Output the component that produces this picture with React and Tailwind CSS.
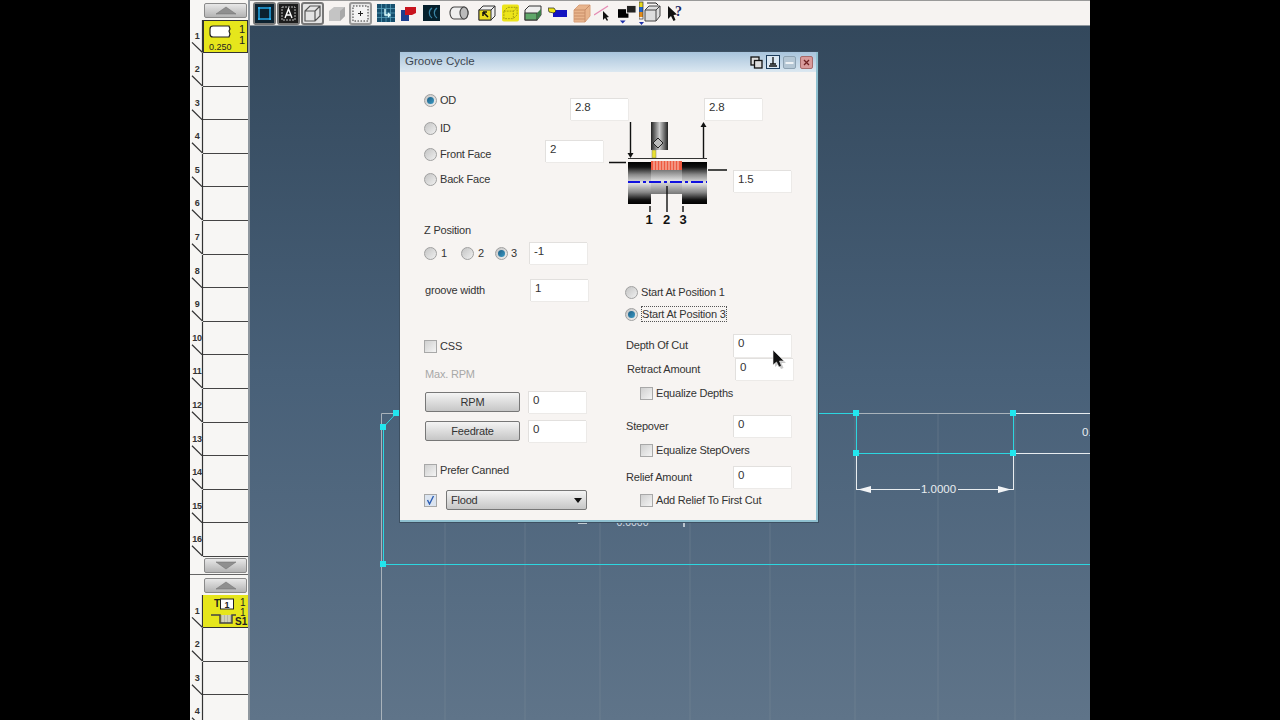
const rowsTop = [2, 3, 4, 5, 6, 7, 8, 9, 10, 11, 12, 13, 14, 15, 16];
const rowsBottom = [2, 3, 4];

function Notch() {
  return (
    <svg className="absolute left-0 top-0 w-[14px] h-full" viewBox="0 0 14 34" preserveAspectRatio="none">
      <path d="M2 23 L12.5 33.5 M12.5 0 V33.5" stroke="#333" strokeWidth="1.2" fill="none" />
    </svg>
  );
}

function RowNum({ n }) {
  return <div className="w-[13px] pl-[1px] flex items-center justify-center text-[9px] font-bold text-[#333] tracking-[-0.3px]">{n}</div>;
}

function ToolRow({ n }) {
  return (
    <div className="relative flex h-[33.6px]">
      <Notch />
      <RowNum n={n} />
      <div className="flex-1 border-b border-[#444] bg-[#f7f6f4]" />
    </div>
  );
}

function ScrollBtn({ down }) {
  return (
    <div className="ml-[14px] mr-[1px] h-[15px] rounded-[2px] border border-[#8a8a8a] bg-gradient-to-b from-[#e8e8e8] to-[#b4b4b4] flex items-center justify-center">
      <svg width="24" height="9" viewBox="0 0 24 9">
        <path d={down ? "M2 1 H22 L12 8 Z" : "M12 1 L22 8 H2 Z"} fill="#8f8f8f" stroke="#6f6f6f" strokeWidth="0.5" />
      </svg>
    </div>
  );
}

function LeftStrip() {
  return (
    <div className="w-[60px] shrink-0 h-full bg-[#f7f6f4] border-r-2 border-[#8f979e] pt-[3px] overflow-hidden">
      <ScrollBtn />
      <div className="relative flex h-[33px] mt-[2px]">
        <Notch />
        <RowNum n={1} />
        <div className="flex-1 bg-[#e6e61c] border border-[#333] relative">
          <svg className="absolute inset-0" width="44" height="31" viewBox="0 0 44 31">
            <path d="M9 5 H25 L26 8 L25 10 L26 13 L25 16 H9 Q6 16 6 13 V8 Q6 5 9 5 Z" fill="#fff" stroke="#222" strokeWidth="1.2" />
            <text x="35" y="12" fontSize="11" fontFamily="Liberation Sans, sans-serif" fill="#222">1</text>
            <text x="35" y="23" fontSize="11" fontFamily="Liberation Sans, sans-serif" fill="#222">1</text>
            <text x="5" y="29" fontSize="9" fontFamily="Liberation Sans, sans-serif" fill="#222">0.250</text>
          </svg>
        </div>
      </div>
      {rowsTop.map((n) => (
        <ToolRow key={n} n={n} />
      ))}
      <div className="mt-[1px]">
        <ScrollBtn down />
      </div>
      <div className="mt-[1px] h-[1px] border-t border-[#666]" />
      <div className="mt-[3px]">
        <ScrollBtn />
      </div>
      <div className="relative flex h-[33px] mt-[2px]">
        <Notch />
        <RowNum n={1} />
        <div className="flex-1 bg-[#e6e61c] border-b border-[#333] relative">
          <svg className="absolute inset-0" width="45" height="32" viewBox="0 0 45 32">
            <text x="11" y="12" fontSize="10" fontWeight="bold" fontFamily="Liberation Sans, sans-serif" fill="#222">T</text>
            <rect x="17.5" y="4" width="13" height="10" fill="#fff" stroke="#222" />
            <text x="21.5" y="12.5" fontSize="9" fontWeight="bold" fontFamily="Liberation Sans, sans-serif" fill="#222">1</text>
            <text x="37" y="11" fontSize="10" fontFamily="Liberation Sans, sans-serif" fill="#222">1</text>
            <text x="37" y="21" fontSize="10" fontFamily="Liberation Sans, sans-serif" fill="#222">1</text>
            <rect x="18" y="20" width="11" height="8" fill="#b8b8a8" />
            <path d="M20 20V28M23 20V28M26 20V28" stroke="#eeeecc" />
            <path d="M8 20 H17 V28 H29 V20 H33" fill="none" stroke="#444" strokeWidth="1.5" />
            <text x="32" y="30" fontSize="10" fontWeight="bold" fontFamily="Liberation Sans, sans-serif" fill="#222">S1</text>
          </svg>
        </div>
      </div>
      {rowsBottom.map((n) => (
        <ToolRow key={n} n={n} />
      ))}
    </div>
  );
}

function Framed({ children, dark }) {
  return (
    <div className={`w-[23px] h-[23px] rounded-[3px] border-2 border-[#777] flex items-center justify-center ${dark ? "bg-[#c9cdd1]" : "bg-[#e4e4e4]"}`}>
      {children}
    </div>
  );
}

function Toolbar() {
  return (
    <div className="h-[26px] shrink-0 bg-[#f6f3f1] border-t border-t-[#999] border-b border-b-[#8f979e] flex items-center pl-[3px]">
      <Framed dark>
        <svg width="19" height="19" viewBox="0 0 19 19">
          <rect width="19" height="19" fill="#0c2230" />
          <rect x="4" y="4" width="11" height="11" fill="none" stroke="#25a7e6" strokeWidth="1.5" />
          <path d="M3 3h2v2H3zM14 3h2v2h-2zM3 14h2v2H3zM14 14h2v2h-2z" fill="#25a7e6" />
        </svg>
      </Framed>
      <div className="ml-[1px]">
        <Framed dark>
          <svg width="19" height="19" viewBox="0 0 19 19">
            <rect width="19" height="19" fill="#1c1c1c" />
            <rect x="3" y="3" width="13" height="13" fill="none" stroke="#bbb" strokeDasharray="2 1" />
            <path d="M6 14 L9.5 5 L13 14 M7.5 11 H11.5" fill="none" stroke="#fff" strokeWidth="1.4" />
          </svg>
        </Framed>
      </div>
      <div className="ml-[1px]">
        <Framed>
          <svg width="19" height="19" viewBox="0 0 19 19">
            <path d="M2 7 L7 2 H17 V12 L12 17 H2 Z M2 7 H12 V17 M12 7 L17 2" fill="none" stroke="#555" strokeWidth="1.2" />
          </svg>
        </Framed>
      </div>
      <svg className="ml-[4px]" width="18" height="18" viewBox="0 0 18 18">
        <path d="M1 7 L6 3 H17 V12 L12 17 H1 Z" fill="#c4c4c4" />
        <path d="M12 7 L17 3 V12 L12 17 Z" fill="#a9a9a9" />
      </svg>
      <div className="ml-[3px] w-[23px] h-[23px] rounded-[3px] border-2 border-[#999] bg-[#e8e8e8] flex items-center justify-center">
        <svg width="17" height="17" viewBox="0 0 17 17">
          <rect x="1" y="1" width="15" height="15" fill="#f4f4f4" stroke="#333" strokeDasharray="1.5 1.5" />
          <path d="M8.5 6 V11 M6 8.5 H11" stroke="#222" />
        </svg>
      </div>
      <svg className="ml-[5px]" width="18" height="18" viewBox="0 0 18 18">
        <rect width="18" height="18" fill="#17506e" />
        <path d="M0 4.5H18M0 9H18M0 13.5H18M4.5 0V18M9 0V18M13.5 0V18" stroke="#5fa7c2" strokeWidth="0.7" />
        <path d="M8 5 V11 H13 M11 9 L13 11 L11 13" stroke="#dff" strokeWidth="1.4" fill="none" />
      </svg>
      <svg className="ml-[6px]" width="15" height="16" viewBox="0 0 15 16">
        <rect x="0" y="5" width="8" height="11" fill="#1c3f8f" />
        <path d="M4 2 H15 V8 L11 10 H4 Z" fill="#c8141e" />
      </svg>
      <svg className="ml-[7px]" width="17" height="16" viewBox="0 0 17 16">
        <rect width="17" height="16" fill="#06202c" />
        <path d="M9 3 A6 6 0 0 0 9 13 M14 3 A6 6 0 0 0 14 13" fill="none" stroke="#3b87a8" strokeWidth="1.2" />
      </svg>
      <svg className="ml-[9px]" width="20" height="16" viewBox="0 0 20 16">
        <path d="M5 2 A4 6 0 0 0 5 14 H15 A4 6 0 0 0 15 2 Z" fill="#eee" stroke="#444" strokeWidth="1.1" />
        <ellipse cx="15" cy="8" rx="4" ry="6" fill="#bbb" stroke="#444" strokeWidth="1.1" />
      </svg>
      <svg className="ml-[9px]" width="18" height="18" viewBox="0 0 18 18">
        <path d="M1 6 L5 2 H17 V12 L13 16 H1 Z" fill="#eee" stroke="#333" />
        <rect x="1" y="6" width="12" height="10" fill="#e8dc1c" stroke="#333" />
        <path d="M5 8 L10 13 M5 8 V12 M5 8 H9" stroke="#111" strokeWidth="1.5" />
        <path d="M13 6 L17 2" stroke="#333" />
      </svg>
      <svg className="ml-[6px]" width="17" height="18" viewBox="0 0 18 18">
        <rect width="18" height="18" rx="2" fill="#ece41a" />
        <path d="M2 7 L6 3 H16 V11 L12 15 H2 Z M2 7 H12 V15 M12 7 L16 3" fill="none" stroke="#a09a10" strokeDasharray="2 1" />
      </svg>
      <svg className="ml-[5px]" width="18" height="16" viewBox="0 0 18 16">
        <path d="M1 5 L5 1 H17 V10 L13 15 H1 Z" fill="#eee" stroke="#333" />
        <rect x="1" y="8" width="12" height="7" fill="#5fa86a" stroke="#333" />
        <path d="M13 8 L17 4 V10 L13 15 Z" fill="#3d7d4a" />
      </svg>
      <svg className="ml-[6px]" width="19" height="12" viewBox="0 0 19 12">
        <rect x="5" y="3" width="14" height="7" fill="#1414c0" />
        <path d="M0 1 L6 1 L8 4 L6 6 L1 5 Z" fill="#ece41a" stroke="#222" strokeWidth="0.7" />
      </svg>
      <svg className="ml-[6px]" width="18" height="20" viewBox="0 0 18 20">
        <path d="M1 7 L6 2 H17 V13 L12 19 H1 Z" fill="#e8b48c" stroke="#d9a27c" />
        <path d="M1 10 H12 M1 13 H12 M1 16 H12 M12 7 V19 M1 7 H12 L17 2" stroke="#c98e68" fill="none" />
      </svg>
      <svg className="ml-[3px]" width="18" height="18" viewBox="0 0 18 18">
        <path d="M0 11 L14 2" stroke="#e58bb4" strokeWidth="1.4" />
        <path d="M9 7 V16 L11 14 L13 17 L14 16 L12.5 13.5 L15 13 Z" fill="#111" />
      </svg>
      <svg className="ml-[6px]" width="19" height="22" viewBox="0 0 20 22">
        <rect x="0" y="7" width="11" height="9" fill="#000" />
        <rect x="9" y="3" width="10" height="8" fill="#222" stroke="#f6f3f1" />
        <path d="M2 19 H8 L5 22 Z" fill="#1c2fa8" />
      </svg>
      <svg className="ml-[2px]" width="23" height="24" viewBox="0 0 23 24">
        <rect x="0" y="1" width="4" height="5" fill="#e8d81c" />
        <rect x="0" y="6" width="4" height="5" fill="#2266cc" />
        <rect x="0" y="11" width="4" height="5" fill="#e08c1c" />
        <rect x="0" y="1" width="4" height="17" fill="none" stroke="#333" strokeWidth="0.7" />
        <path d="M6 9 L10 5 H21 V15 L17 20 H6 Z M6 9 H17 V20 M17 9 L21 5" fill="#ddd" stroke="#444" />
        <path d="M8 2 H17 L19 4" fill="none" stroke="#222" />
        <path d="M0 21 H5 L2.5 24 Z" fill="#1c2fa8" />
      </svg>
      <svg className="ml-[5px]" width="18" height="18" viewBox="0 0 18 18">
        <path d="M1 2 V15 L4 12 L6.5 17 L8.5 16 L6.5 11 L10 10.5 Z" fill="#111" />
        <text x="8" y="12" fontSize="14" fontWeight="bold" fontFamily="Liberation Serif, serif" fill="#1c2a66">?</text>
      </svg>
    </div>
  );
}

function CanvasDrawing() {
  const handles = [[396, 413], [383, 427], [856, 413], [1013, 413], [856, 453], [1013, 453], [383, 564]];
  const gridX = [445, 525, 600, 690, 770, 855, 938, 1015];
  return (
    <svg className="absolute inset-0" width="840" height="694" viewBox="250 26 840 694">
      {gridX.map((x) => (
        <line key={x} x1={x} y1="413" x2={x} y2="720" stroke="#8a97a2" strokeWidth="1" opacity="0.3" />
      ))}
      <path d="M381.5 720 V413.5 H1090" fill="none" stroke="#a9b3bb" strokeWidth="1" />
      <path d="M1013 413.5 H1090 M1013 453.5 H1090" stroke="#e8edf0" strokeWidth="1" fill="none" />
      <path d="M396 413.5 L383.5 427 V564.5 H1090 M818 413.5 H856.5 V453.5 H1013.5 V413.5" fill="none" stroke="#2cd6e0" strokeWidth="1" />
      {handles.map(([x, y]) => (
        <rect key={`${x}-${y}`} x={x - 3} y={y - 3} width="6" height="6" fill="#22e6ee" />
      ))}
      <path d="M856.5 456 V490 M1013.5 456 V490 M856 489.5 H920 M958 489.5 H1013" stroke="#e8edf0" fill="none" />
      <path d="M858 489.5 L871 486 V493 Z M1011 489.5 L998 486 V493 Z" fill="#f2f4f6" />
      <text x="938.5" y="493" textAnchor="middle" fontSize="11.5" fontFamily="Liberation Sans, sans-serif" fill="#e8edf0">1.0000</text>
      <text x="1082" y="436" fontSize="11.5" fontFamily="Liberation Sans, sans-serif" fill="#e8edf0">0.</text>
      <text x="632.5" y="526" textAnchor="middle" fontSize="10.5" fontFamily="Liberation Sans, sans-serif" fill="#d5dce2">0.0000</text>
      <path d="M578 523 H587 M684 523 V527" stroke="#e8edf0" strokeWidth="1.4" />
    </svg>
  );
}

function Radio({ checked }) {
  return (
    <span className="relative w-[13px] h-[13px] shrink-0 rounded-full border border-[#a0a0a0] bg-gradient-to-br from-[#c4c4c4] to-[#f0f0f0] flex items-center justify-center">
      {checked && <span className="w-[7px] h-[7px] rounded-full bg-gradient-to-br from-[#1d5f86] to-[#3d9ac4]" />}
    </span>
  );
}

function Check({ checked }) {
  return (
    <span className={`w-[13px] h-[13px] shrink-0 border border-[#a8a8a8] flex items-center justify-center ${checked ? "bg-[#dbe4f0]" : "bg-gradient-to-br from-[#d0d0d0] to-[#f4f4f4]"}`}>
      {checked && (
        <svg width="9" height="10" viewBox="0 0 9 10">
          <path d="M1.5 5 L3.5 9 L7.5 1" fill="none" stroke="#2f5fb4" strokeWidth="1.4" />
        </svg>
      )}
    </span>
  );
}

function Field({ value, className = "" }) {
  return (
    <div className={`w-[58px] h-[22px] shrink-0 bg-white border-t border-l border-[#e2e0de] shadow-[1px_1px_0_#eceae8] pl-[4px] text-[11.5px] leading-[17px] text-[#333] ${className}`}>
      {value}
    </div>
  );
}

function PushBtn({ children }) {
  return (
    <button className="w-[95px] h-[20px] rounded-[2px] border border-[#777] bg-gradient-to-b from-[#f4f4f4] to-[#c6c6c6] text-[11px] leading-[18px] text-[#333]">
      {children}
    </button>
  );
}

function GrooveDrawing() {
  return (
    <svg className="absolute left-[200px] top-[43px]" width="135" height="115" viewBox="600 115 135 115">
      <defs>
        <linearGradient id="body" x1="0" y1="0" x2="0" y2="1">
          <stop offset="0" stopColor="#000" />
          <stop offset="0.12" stopColor="#111" />
          <stop offset="0.3" stopColor="#888" />
          <stop offset="0.5" stopColor="#e4e4e4" />
          <stop offset="0.72" stopColor="#888" />
          <stop offset="0.9" stopColor="#111" />
          <stop offset="1" stopColor="#000" />
        </linearGradient>
        <linearGradient id="mid" x1="0" y1="0" x2="0" y2="1">
          <stop offset="0" stopColor="#777" />
          <stop offset="0.45" stopColor="#e4e4e4" />
          <stop offset="1" stopColor="#777" />
        </linearGradient>
        <linearGradient id="holder" x1="0" y1="0" x2="1" y2="0">
          <stop offset="0" stopColor="#222" />
          <stop offset="0.5" stopColor="#ccc" />
          <stop offset="1" stopColor="#222" />
        </linearGradient>
      </defs>
      <path d="M630.5 122 V154" stroke="#111" strokeWidth="1.4" />
      <path d="M627.5 153 H633.5 L630.5 158 Z" fill="#111" />
      <path d="M703.5 158 V126" stroke="#111" strokeWidth="1.4" />
      <path d="M700.5 127 H706.5 L703.5 122 Z" fill="#111" />
      <rect x="651" y="122" width="17" height="28" fill="url(#holder)" />
      <path d="M658 138 L663 143 L658 148 L653 143 Z" fill="#bbb" stroke="#222" />
      <rect x="652" y="150" width="4" height="8" fill="#e8e030" stroke="#777" strokeWidth="0.5" />
      <path d="M628 158.5 H707" stroke="#333" strokeWidth="1.2" />
      <path d="M609 162.5 H626 M708 170 H727" stroke="#111" strokeWidth="1.4" />
      <rect x="628" y="162" width="23" height="42" fill="url(#body)" />
      <rect x="651" y="170" width="32" height="24" fill="url(#mid)" />
      <rect x="682" y="162" width="25" height="42" fill="url(#body)" />
      <rect x="651" y="161" width="31" height="9" fill="#ee5a40" />
      <path d="M654 161V170M657 161V170M660 161V170M663 161V170M666 161V170M669 161V170M672 161V170M675 161V170M678 161V170" stroke="#f8e8e0" strokeWidth="0.8" />
      <path d="M628 182 H707" stroke="#1010e0" strokeWidth="2" strokeDasharray="12 3 3 3" />
      <path d="M650 206 V212 M683 206 V212" stroke="#111" strokeWidth="1.4" />
      <path d="M667 186 V212" stroke="#111" strokeWidth="1.4" />
      <text x="649" y="224" textAnchor="middle" fontSize="13" fontWeight="bold" fontFamily="Liberation Sans, sans-serif" fill="#111">1</text>
      <text x="666.5" y="224" textAnchor="middle" fontSize="13" fontWeight="bold" fontFamily="Liberation Sans, sans-serif" fill="#111">2</text>
      <text x="683" y="224" textAnchor="middle" fontSize="13" fontWeight="bold" fontFamily="Liberation Sans, sans-serif" fill="#111">3</text>
    </svg>
  );
}

function Dialog() {
  return (
    <div className="absolute left-[150px] top-[26px] w-[418px] h-[470px] bg-[#f7f4f2] border-b-2 border-r-2 border-[#8fc0d0] shadow-[0_0_0_1px_#3d5062] text-[11px] tracking-[-0.2px] text-[#333] flex flex-col">
      {/* barra de titulo */}
      <div className="h-[20px] shrink-0 bg-gradient-to-b from-[#a8c4dc] to-[#dce8f1] flex items-center pl-[5px] pr-[3px]">
        <span className="text-[11.5px] tracking-normal text-[#3c4650]">Groove Cycle</span>
        <div className="ml-auto flex items-center gap-[3px]">
          <svg width="13" height="13" viewBox="0 0 13 13">
            <rect x="1" y="1" width="8" height="8" fill="#ddd" stroke="#111" strokeWidth="1.3" />
            <rect x="4.5" y="4.5" width="7.5" height="7.5" fill="#ddd" stroke="#111" strokeWidth="1.3" />
          </svg>
          <svg width="14" height="14" viewBox="0 0 14 14">
            <rect x="0.5" y="0.5" width="13" height="13" fill="#dbe8f3" stroke="#1c3c5c" />
            <path d="M7 2 V9 M4 9 H10 M3 11 H11" stroke="#111" strokeWidth="1.3" />
          </svg>
          <svg width="13" height="13" viewBox="0 0 13 13">
            <rect x="0.5" y="0.5" width="12" height="12" rx="1.5" fill="#b4c6d4" stroke="#8ea2b2" />
            <rect x="2.5" y="6" width="8" height="2" fill="#eef2f5" />
          </svg>
          <svg className="ml-[1px]" width="13" height="13" viewBox="0 0 13 13">
            <rect x="0.5" y="0.5" width="12" height="12" rx="1.5" fill="#d89a9a" stroke="#a86a6a" />
            <path d="M4 4 L9 9 M9 4 L4 9" stroke="#6e2020" strokeWidth="1.3" />
          </svg>
        </div>
      </div>

      {/* parte de arriba: radios y dibujo de la ranura */}
      <div className="relative h-[150px] shrink-0">
        <div className="pl-[24px] pt-[20px] flex flex-col">
          <label className="h-[16px] flex items-center gap-[3px]"><Radio checked /> OD</label>
          <label className="h-[16px] mt-[12px] flex items-center gap-[3px]"><Radio /> ID</label>
          <label className="h-[16px] mt-[10px] flex items-center gap-[3px]"><Radio /> Front Face</label>
          <label className="h-[16px] mt-[9px] flex items-center gap-[3px]"><Radio /> Back Face</label>
        </div>
        <GrooveDrawing />
        <Field value="2.8" className="absolute left-[170px] top-[26px]" />
        <Field value="2.8" className="absolute left-[304px] top-[26px]" />
        <Field value="2" className="absolute left-[145px] top-[68px]" />
        <Field value="1.5" className="absolute left-[333px] top-[98px]" />
      </div>

      {/* parte de abajo: dos columnas */}
      <div className="flex">
        <div className="w-[225px] pl-[24px] shrink-0 flex flex-col">
          <div className="h-[16px] flex items-center">Z Position</div>
          <div className="mt-[4px] h-[22px] flex items-center">
            <Radio /><span className="ml-[4px] w-[20px]">1</span>
            <Radio /><span className="ml-[4px] w-[17px]">2</span>
            <Radio checked /><span className="ml-[3px] w-[18px]">3</span>
            <Field value="-1" />
          </div>
          <div className="mt-[15px] h-[22px] flex items-center pl-[1px]">
            <span className="w-[105px]">groove width</span>
            <Field value="1" />
          </div>
          <label className="mt-[36px] h-[18px] flex items-center gap-[3px]"><Check /> CSS</label>
          <div className="mt-[11px] h-[16px] flex items-center pl-[1px] text-[#a8a8a8]">Max. RPM</div>
          <div className="mt-[9px] h-[22px] flex items-center gap-[8px] pl-[1px]"><PushBtn>RPM</PushBtn><Field value="0" /></div>
          <div className="mt-[7px] h-[22px] flex items-center gap-[8px] pl-[1px]"><PushBtn>Feedrate</PushBtn><Field value="0" /></div>
          <label className="mt-[19px] h-[18px] flex items-center gap-[3px]"><Check /> Prefer Canned</label>
          <div className="mt-[11px] h-[20px] flex items-center gap-[9px]">
            <Check checked />
            <div className="w-[141px] h-[20px] rounded-[2px] border border-[#777] bg-gradient-to-b from-[#f4f4f4] to-[#c6c6c6] flex items-center pl-[4px] pr-[4px]">
              Flood
              <svg className="ml-auto" width="8" height="5" viewBox="0 0 8 5"><path d="M0 0 H8 L4 5 Z" fill="#111" /></svg>
            </div>
          </div>
        </div>
        <div className="flex-1 flex flex-col">
          <label className="mt-[61px] h-[18px] flex items-center gap-[3px]"><Radio /> Start At Position 1</label>
          <label className="mt-[4px] h-[18px] flex items-center gap-[3px]">
            <Radio checked />
            <span className="border border-dotted border-[#555] leading-[14px]">Start At Position 3</span>
          </label>
          <div className="mt-[11px] h-[23px] flex items-center pl-[1px]"><span className="w-[107px]">Depth Of Cut</span><Field value="0" className="h-[23px]" /></div>
          <div className="mt-[1px] h-[22px] flex items-center pl-[2px]"><span className="w-[108px]">Retract Amount</span><Field value="0" /></div>
          <label className="mt-[4px] h-[18px] flex items-center gap-[3px] pl-[15px]"><Check /> Equalize Depths</label>
          <div className="mt-[13px] h-[22px] flex items-center pl-[1px]"><span className="w-[107px]">Stepover</span><Field value="0" /></div>
          <label className="mt-[4px] h-[18px] flex items-center gap-[3px] pl-[15px]"><Check /> Equalize StepOvers</label>
          <div className="mt-[7px] h-[22px] flex items-center pl-[1px]"><span className="w-[107px]">Relief Amount</span><Field value="0" /></div>
          <label className="mt-[3px] h-[18px] flex items-center gap-[3px] pl-[15px]"><Check /> Add Relief To First Cut</label>
        </div>
      </div>
    </div>
  );
}

function Cursor() {
  return (
    <svg className="absolute left-[522px] top-[323px]" width="16" height="22" viewBox="0 0 16 22">
      <path d="M3 3 V18 L6.5 15 L9 20 L11.5 19 L9.5 14 L14 14 Z" fill="#888" opacity="0.45" />
      <path d="M1 1 V16 L4.5 13 L7 18 L9.5 17 L7.5 12 L12 12 Z" fill="#111" stroke="#eee" strokeWidth="0.6" />
    </svg>
  );
}

export default function App() {
  return (
    <div className="w-[1280px] h-[720px] bg-black flex justify-center overflow-hidden font-['Liberation_Sans',sans-serif]">
      <div className="w-[900px] h-full flex">
        <LeftStrip />
        <div className="flex-1 flex flex-col min-w-0">
          <Toolbar />
          <div className="relative flex-1 overflow-hidden bg-gradient-to-b from-[#33485c] via-[#486078] to-[#5f7489]">
            <CanvasDrawing />
            <Dialog />
            <Cursor />
          </div>
        </div>
      </div>
    </div>
  );
}
